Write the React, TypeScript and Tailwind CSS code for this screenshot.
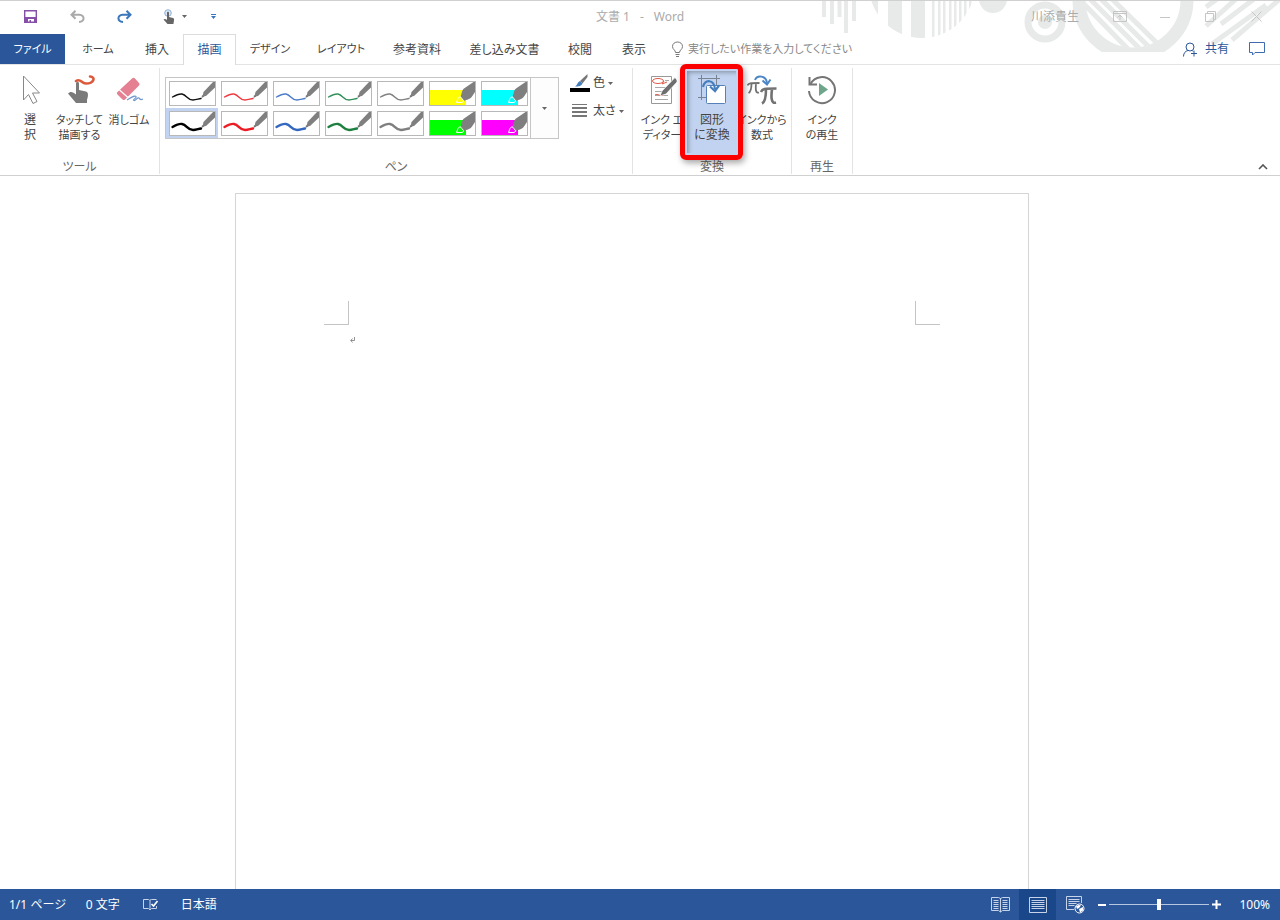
import React from "react";

const ribbonTabs = [
  { label: "ホーム", width: "w-[66px]", kana: true },
  { label: "挿入", width: "w-[52px]" },
  { label: "描画", width: "w-[53px]", active: true },
  { label: "デザイン", width: "w-[68px]", kana: true },
  { label: "レイアウト", width: "w-[74px]", kana: true },
  { label: "参考資料", width: "w-[78px]" },
  { label: "差し込み文書", width: "w-[97px]" },
  { label: "校閲", width: "w-[54px]" },
  { label: "表示", width: "w-[54px]" },
];

type Pen = { name: string; color: string; kind: "thin" | "thick" | "marker"; selected?: boolean };

const pens: Pen[] = [
  { name: "黒のペン", color: "#111111", kind: "thin" },
  { name: "赤のペン", color: "#f03a40", kind: "thin" },
  { name: "青のペン", color: "#4a7cc8", kind: "thin" },
  { name: "緑のペン", color: "#32905a", kind: "thin" },
  { name: "灰色のペン", color: "#808080", kind: "thin" },
  { name: "黄の蛍光ペン", color: "#ffff00", kind: "marker" },
  { name: "水色の蛍光ペン", color: "#00ffff", kind: "marker" },
  { name: "黒の太いペン", color: "#000000", kind: "thick", selected: true },
  { name: "赤の太いペン", color: "#ed1c24", kind: "thick" },
  { name: "青の太いペン", color: "#3468c0", kind: "thick" },
  { name: "緑の太いペン", color: "#1e8040", kind: "thick" },
  { name: "灰色の太いペン", color: "#7f7f7f", kind: "thick" },
  { name: "緑の蛍光ペン", color: "#00ff00", kind: "marker" },
  { name: "桃色の蛍光ペン", color: "#ff00ff", kind: "marker" },
];

function PenSwatch({ pen }: { pen: Pen }) {
  return (
    <svg width="45" height="23" viewBox="0 0 45 23" className="block">
      {pen.kind === "marker" ? (
        <>
          <path d="M0 8H36V23H0Z" fill={pen.color} />
          <path d="M45 0H43.500L34 6.500C31.500 8.500 32 12 30.500 14.500L34 19C37 17.500 40 17.500 42 14.500L45 10Z" fill="#7f7f7f" />
          <path d="M30 14.500L28 16.500L26.500 20.500H32L34 19Z" fill={pen.color} stroke="#fff" strokeWidth="1" />
        </>
      ) : (
        <>
          <path
            d="M2.500 15C6 13 9 11.500 12 12C17 13 17 18 23 18C26 18 28 17 31 16.500"
            fill="none"
            stroke={pen.color}
            strokeWidth={pen.kind === "thick" ? 2.4 : 1.4}
            strokeLinecap="round"
          />
          <path d="M45 0H43L33.500 10L32.500 14.500L36 14L45 5.500Z" fill="#7f7f7f" />
          <path d="M31.500 16L32 13L34.500 14.500Z" fill="#777" />
        </>
      )}
    </svg>
  );
}

function Caret({ className = "text-[#666]" }: { className?: string }) {
  return (
    <svg width="5" height="3" viewBox="0 0 5 3" className={className}>
      <path d="M0 0H5L2.500 3Z" fill="currentColor" />
    </svg>
  );
}

function TitleArt() {
  const stripes = [932, 938, 943, 949, 954, 959, 964, 969];
  return (
    <svg width="460" height="51" viewBox="820 1 460 51" className="pointer-events-none absolute right-0 top-0">
      <defs>
        <clipPath id="discClip">
          <circle cx="922" cy="-15" r="53" />
        </clipPath>
        <clipPath id="ringClip">
          <circle cx="1133" cy="0" r="48" />
        </clipPath>
      </defs>
      <g fill="#e7eae9">
        <path d="M822 0h4v17h-4zM830 0h4v24h-4zM837.500 0h4v17h-4zM844 0h4v33h-4zM852 0h4v21h-4z" />
        <g clipPath="url(#discClip)">
          <path d="M868 0h10v50h-10zM888 0h14v50h-14zM911 0h14v50h-14z" />
          {stripes.map((x) => (
            <path key={x} d={`M${x} 0h2.500v50h-2.500z`} />
          ))}
        </g>
        <circle cx="993" cy="-1" r="14" />
        <circle cx="1045" cy="22" r="7" />
      </g>
      <g fill="none" stroke="#e7eae9">
        <circle cx="1045" cy="22" r="17" strokeWidth="7" />
        <circle cx="1133" cy="0" r="54" strokeWidth="13" />
        <g clipPath="url(#ringClip)" strokeWidth="5">
          <path d="M1112 -1L1160 46M1101 -1L1149 47M1090 -1L1139 48M1079 -1L1128 49" />
        </g>
        <path
          d="M1217 -1L1206 7M1236 -1L1206 26M1254 -1L1221 24M1266 5L1212 44M1280 -1L1232 40"
          strokeWidth="5"
        />
      </g>
    </svg>
  );
}

function TouchIcon({ small = false }: { small?: boolean }) {
  return small ? (
    <svg width="14" height="16" viewBox="0 0 14 16">
      <circle cx="5" cy="4" r="3.300" fill="#dce8f5" stroke="#8fb0d8" />
      <path d="M4 3.500C4 2.500 6 2.500 6 3.500V8L10 9C11.500 9.500 11.300 11 10.500 14V15H4.500L0.500 10.500C1.500 9.500 3 10 4 11Z" fill="#666" />
    </svg>
  ) : (
    <svg width="30" height="30" viewBox="0 0 30 30">
      <path d="M11 8C11 6.500 14 6.500 14 8V15L21 16.500C24 17.500 23 22 22 25V28H11L3 18.500C5 16 8 16.500 11 19.500Z" fill="#7a7a7a" />
      <path d="M11 6C16 3 16 8.500 21 8.500C29 8.500 31 2 25 1.500" fill="none" stroke="#dc5a3c" strokeWidth="2.600" strokeLinecap="round" />
    </svg>
  );
}

function SelectIcon() {
  return (
    <svg width="20" height="30" viewBox="0 0 20 30">
      <path d="M3.500 1V25L8.500 19.500L13 28.500L17 26.500L12.500 18H19.500Z" fill="#fff" stroke="#888" strokeWidth="1" />
    </svg>
  );
}

function EraserIcon() {
  return (
    <svg width="28" height="28" viewBox="0 0 28 28">
      <path d="M2.500 17L17 3.500C18 2.500 19 2.500 20 3.500L24 8C25 9 24.500 10 24 10.500L10 24.500C9 25.500 8 25 7 24L2.500 19.500C1.500 18.500 1.800 17.800 2.500 17Z" fill="#e57f92" />
      <path d="M4.500 15L13 22.500" stroke="#fff" strokeWidth="1.200" />
      <path d="M12 25C17 22 20 20 21 21.500C22 23 17 25 19 25.500C21 26 22 22 24 23C25 25 26 25 28 24" fill="none" stroke="#7098cd" strokeWidth="1.200" />
    </svg>
  );
}

function InkEditorIcon() {
  return (
    <svg width="30" height="30" viewBox="0 0 30 30">
      <path d="M4.500 1.500H24.500V28.500H4.500Z" fill="#fff" stroke="#999" />
      <path d="M8 12.500H21M8 16.500H20M8 20.500H21M8 24.500H21M18 5.500H22" stroke="#aaa" />
      <ellipse cx="11" cy="6" rx="5.500" ry="2.500" fill="none" stroke="#df5a4b" />
      <path d="M17 6L15 9L20 7M8 20C11 18 13 22 16 20" fill="none" stroke="#df5a4b" />
      <path d="M28 2.500L30 5V7L19 19L13 21L15 16Z" fill="#6e6e6e" stroke="#fff" strokeWidth=".7" />
    </svg>
  );
}

function ShapeIcon() {
  return (
    <svg width="30" height="30" viewBox="0 0 30 30">
      <path d="M1 3.500H23M4.500 0V25M19.500 0V10M1 22.500H9" fill="none" stroke="#7b8390" />
      <rect x="9.500" y="10.500" width="19" height="18" rx="1" fill="#fff" stroke="#5580b8" />
      <path d="M6 12C8 4 17 4 18 14" fill="none" stroke="#457ebd" strokeWidth="2.200" />
      <path d="M13 11.500L18 16L22 10.500" fill="none" stroke="#457ebd" strokeWidth="2.200" />
    </svg>
  );
}

function MathIcon() {
  return (
    <svg width="30" height="30" viewBox="0 0 30 30">
      <g fill="none" stroke="#727272">
        <path d="M.5 10.500C1.500 8 3 8 12.500 8M4.500 8.500C4.500 14 3.500 17 1.500 18M9 8.500C8.500 14 8.500 18.500 12 17.500" strokeWidth="1.800" />
        <path d="M14 17C15.500 13.500 17 13.500 29.500 13.500M19 14C19 21 18 27 15 28.500M25 14C24 22 24 29 29 27.500" strokeWidth="2.600" />
      </g>
      <path d="M8 5C10 0 19 0 20 8" fill="none" stroke="#4b86c6" strokeWidth="2" />
      <path d="M15.500 5.500L20 9.500L23.500 4.500" fill="none" stroke="#4b86c6" strokeWidth="2" />
    </svg>
  );
}

function ReplayIcon() {
  return (
    <svg width="30" height="30" viewBox="0 0 30 30">
      <path d="M3.500 9A13 13 0 1 1 2 16" fill="none" stroke="#757575" strokeWidth="2" />
      <path d="M2.500 2V9.500H10" fill="none" stroke="#757575" strokeWidth="2" />
      <path d="M12 8L21 14.500L12 21Z" fill="#6ea58b" />
    </svg>
  );
}

type ToolProps = { icon: React.ReactNode; lines: string[]; width: string; pressed?: boolean; kana?: boolean };

function ToolButton({ icon, lines, width, pressed, kana }: ToolProps) {
  return (
    <button
      aria-pressed={pressed}
      className={`flex h-[88px] shrink-0 flex-col items-center pt-[7px] ${width} ${pressed ? "bg-[#c1d3f0]" : ""}`}
    >
      <span className="flex h-8 items-start">{icon}</span>
      <span
        className={`mt-[5px] flex flex-col items-center whitespace-nowrap leading-[15px] ${
          kana ? "text-[11px]" : "text-[12px]"
        }`}
      >
        {lines.map((line) => (
          <span key={line}>{line}</span>
        ))}
      </span>
    </button>
  );
}

function Group({ label, width, children }: { label: string; width: string; children: React.ReactNode }) {
  return (
    <section aria-label={label} className={`flex shrink-0 flex-col border-r border-[#e3e3e3] ${width}`}>
      <div className="flex h-[92px] shrink-0 items-start">{children}</div>
      <div className="text-center text-[12px] leading-[14px] text-[#666]">{label}</div>
    </section>
  );
}

function CropMark({ side }: { side: "left" | "right" }) {
  return (
    <span
      className={`block h-6 w-[25px] border-b border-[#c4c4c4] ${side === "left" ? "border-r" : "border-l"}`}
    />
  );
}

export default function App() {
  return (
    <div className="flex min-h-screen flex-col bg-white font-['Noto_Sans','Noto_Sans_CJK_JP',sans-serif] text-[12px] text-[#444] [font-feature-settings:'palt']">
      <header className="relative border-t border-[#d0d0d0]">
        <TitleArt />
        <div className="relative flex h-[33px] items-center pb-[2px]">
          <div className="flex flex-1 items-center">
            <button aria-label="上書き保存" className="ml-6">
              <svg width="13" height="13" viewBox="0 0 13 13" className="block">
                <path d="M.7 .7H12.300V12.300H.7Z" fill="#fff" stroke="#8650a8" strokeWidth="1.400" />
                <path d="M1 7H12V12H10V9H4V12H1Z" fill="#8650a8" />
                <path d="M5.500 10H7V12H5.500Z" fill="#8650a8" />
              </svg>
            </button>
            <button aria-label="元に戻す" className="ml-[33px]">
              <svg width="15" height="13" viewBox="0 0 15 13" className="block">
                <path d="M5.500 .8L1.500 4.800L5.500 8.800M2 4.800H9.500C15 5 15 11.500 9 12" fill="none" stroke="#aaa" strokeWidth="2" />
              </svg>
            </button>
            <button aria-label="やり直し" className="ml-8">
              <svg width="15" height="13" viewBox="0 0 15 13" className="block">
                <path d="M9.500 .8L13.500 4.800L9.500 8.800M13 4.800H5.500C0 5 0 11.500 6 12" fill="none" stroke="#3b77bb" strokeWidth="2" />
              </svg>
            </button>
            <button aria-label="タッチ/マウス モード" className="ml-[31px] flex items-center gap-[5px]">
              <TouchIcon small />
              <Caret />
            </button>
            <button aria-label="クイック アクセス ツール バーのユーザー設定" className="ml-6">
              <svg width="5" height="5" viewBox="0 0 5 5">
                <path d="M0 0H5V1H0ZM0 2H5L2.500 5Z" fill="#3b77bb" />
              </svg>
            </button>
          </div>
          <h1 className="flex gap-[10px] text-[12px] font-normal text-[#aaa]">
            <span>文書 1</span>
            <span>-</span>
            <span>Word</span>
          </h1>
          <div className="flex flex-1 items-center justify-end text-[#c6c6c6]">
            <span className="mr-[34px] text-[#aaa]">川添貴生</span>
            <button aria-label="リボンの表示オプション" className="mr-[33px]">
              <svg width="14" height="11" viewBox="0 0 14 11" fill="none" stroke="currentColor" className="block">
                <path d="M.5 .5H13.500V10.500H.5ZM.5 2.500H13.500M7 9V4M4.500 6.500L7 4L9.500 6.500" />
              </svg>
            </button>
            <button aria-label="最小化" className="mr-[35px]">
              <svg width="10" height="10" viewBox="0 0 10 10" stroke="currentColor" className="block">
                <path d="M0 5.500H10" />
              </svg>
            </button>
            <button aria-label="元に戻す (縮小)" className="mr-[35px]">
              <svg width="11" height="11" viewBox="0 0 11 11" fill="none" stroke="currentColor" className="block">
                <path d="M.5 2.500H8.500V10.500H.5ZM2.500 2V.5H10.500V8.500H9" />
              </svg>
            </button>
            <button aria-label="閉じる" className="mr-[18px]">
              <svg width="11" height="11" viewBox="0 0 11 11" stroke="currentColor" className="block">
                <path d="M.5 .5L10.500 10.500M10.500 .5L.5 10.500" />
              </svg>
            </button>
          </div>
        </div>

        <div className="relative flex h-[31px] items-stretch border-b border-[#e3e3e3]">
          <button className="w-[65px] bg-[#2b579a] text-[11px] text-white">ファイル</button>
          <nav className="flex" role="tablist">
            {ribbonTabs.map((tab) => (
              <button
                key={tab.label}
                role="tab"
                aria-selected={!!tab.active}
                className={`whitespace-nowrap ${tab.width} ${tab.kana ? "text-[11px]" : ""} ${
                  tab.active
                    ? "-mb-px border border-b-0 border-[#dcdcdc] bg-white text-[#2b579a]"
                    : "pt-px"
                }`}
              >
                {tab.label}
              </button>
            ))}
          </nav>
          <label className="ml-[10px] flex flex-1 items-center gap-1">
            <svg width="13" height="16" viewBox="0 0 13 16" fill="none" stroke="#777">
              <path d="M4.500 11.500C4.500 9 1.500 8.500 1.500 5.500C1.500 -.5 11.500 -.5 11.500 5.500C11.500 8.500 8.500 9 8.500 11.500ZM4.500 13.500H8.500M5 15.500H8" />
            </svg>
            <input
              aria-label="操作アシスト"
              placeholder="実行したい作業を入力してください"
              className="w-60 bg-transparent text-[11px] outline-none placeholder:text-[#888]"
            />
          </label>
          <button className="mr-5 flex items-center gap-2 text-[#2b579a]">
            <svg width="14" height="15" viewBox="0 0 14 15" fill="none" stroke="currentColor">
              <circle cx="7" cy="5" r="4" />
              <path d="M.5 14.500C.5 11 2.500 9 5 8.500M9 8.500L10 9.500M8 11.500H14M11 8.500V14.500" />
            </svg>
            共有
          </button>
          <button aria-label="コメント" className="mr-[15px] text-[#3f6cae]">
            <svg width="16" height="14" viewBox="0 0 16 14" fill="none" stroke="currentColor">
              <path d="M.5 .5H15.500V10.500H6L3.500 13V10.500H.5Z" />
            </svg>
          </button>
        </div>
      </header>

      <div className="relative flex h-[111px] border-b border-[#d0d0d0] pt-[3px] pb-px" role="toolbar" aria-label="描画">
        <Group label="ツール" width="w-[160px]">
          <div className="flex pl-[5px]">
            <ToolButton icon={<SelectIcon />} lines={["選", "択"]} width="w-[50px]" />
            <ToolButton icon={<TouchIcon />} lines={["タッチして", "描画する"]} width="w-[49px]" kana />
            <ToolButton icon={<EraserIcon />} lines={["消しゴム"]} width="w-[50px]" kana />
          </div>
        </Group>

        <Group label="ペン" width="w-[473px]">
          <div className="ml-[5px] mt-[9px] flex border border-[#c6c6c6]">
            <div className="grid grid-cols-7">
              {pens.map((pen) => (
                <button
                  key={pen.name}
                  aria-label={pen.name}
                  aria-pressed={!!pen.selected}
                  className={`flex h-[30px] w-[52px] items-center justify-center ${pen.selected ? "bg-[#c1d3f0]" : ""}`}
                >
                  <span className="border border-[#b8b8b8] bg-white">
                    <PenSwatch pen={pen} />
                  </span>
                </button>
              ))}
            </div>
            <button aria-label="その他のペン" className="flex w-7 items-center justify-center border-l border-[#c6c6c6] bg-[#fdfdfd]">
              <Caret />
            </button>
          </div>
          <div className="ml-[11px] mt-px flex flex-col">
            <button className="flex h-7 items-center gap-[3px]">
              <svg width="20" height="18" viewBox="0 0 20 18">
                <path d="M0 14H20V18H0Z" fill="#000" />
                <path d="M17.500 0L10 7L12.500 9.500L17.500 3Z" fill="#777" />
                <path d="M10 7L12.500 9.500C11 12.500 8 12.500 5 12.500C7.500 11 7.500 8 10 7Z" fill="#457ebd" />
              </svg>
              色
              <Caret />
            </button>
            <button className="flex h-7 items-center gap-[3px]">
              <svg width="20" height="14" viewBox="0 0 20 14" fill="#777">
                <path d="M2 0H17V1H2ZM2 3H17V5H2ZM2 7H17V9H2ZM2 11H17V13H2Z" />
              </svg>
              太さ
              <Caret />
            </button>
          </div>
        </Group>

        <Group label="変換" width="w-[159px]">
          <div className="relative flex pl-1">
            <ToolButton icon={<InkEditorIcon />} lines={["インク エ", "ディター"]} width="w-[50px]" kana />
            <ToolButton icon={<ShapeIcon />} lines={["図形", "に変換"]} width="w-[50px]" pressed />
            <ToolButton icon={<MathIcon />} lines={["インクから", "数式"]} width="w-[50px]" kana />
            <span className="pointer-events-none absolute -top-1 left-[47px] h-24 w-[63px] rounded-[6px] border-[5px] border-[#fa0000] shadow-[2px_3px_6px_rgba(0,0,0,0.35),inset_0_0_0_2px_#c1d3f0,inset_3px_3px_5px_rgba(0,0,0,0.35)]" />
          </div>
        </Group>

        <Group label="再生" width="w-[61px]">
          <ToolButton icon={<ReplayIcon />} lines={["インク", "の再生"]} width="w-[60px]" kana />
        </Group>

        <button aria-label="リボンを折りたたむ" className="ml-auto mr-3 self-end pb-1">
          <svg width="10" height="6" viewBox="0 0 10 6" fill="none" stroke="#555" strokeWidth="1.600">
            <path d="M1 5L5 1L9 5" />
          </svg>
        </button>
      </div>

      <main className="flex flex-1 justify-center pr-4 pt-[17px]">
        <article className="w-[794px] border border-b-0 border-[#d5d5d5] px-[88px] pt-[107px]">
          <div className="flex justify-between">
            <CropMark side="left" />
            <CropMark side="right" />
          </div>
          <div className="pl-[26px] pt-3">
            <svg width="5" height="6" viewBox="0 0 5 6" fill="none" stroke="#777" strokeWidth=".8">
              <path d="M4.500 0V3.500H.8M2.500 1.500L.8 3.500L2.500 5.500" />
            </svg>
          </div>
        </article>
      </main>

      <footer className="flex h-[31px] items-center bg-[#2b579a] text-white">
        <span className="ml-[9px]">1/1 ページ</span>
        <span className="ml-5">0 文字</span>
        <button aria-label="文章校正" className="ml-[23px]">
          <svg width="15" height="13" viewBox="0 0 15 13" fill="none" stroke="#c7d3e8" className="block">
            <path d="M6.500 2L5.500 1.500H.5V10.500H5.500L7 12L8.500 10.500H13.500V8M7 12V2L8.500 1.500H13.500" />
            <path d="M8.500 6L10.500 8L14.500 3" stroke="#fff" strokeWidth="1.600" />
          </svg>
        </button>
        <span className="ml-[23px]">日本語</span>
        <div className="ml-auto flex h-full items-center">
          <button aria-label="閲覧モード" className="flex h-full w-[38px] items-center justify-center">
            <svg width="19" height="17" viewBox="0 0 19 17" fill="none" stroke="#c7d3e8">
              <path d="M.5 1.500H7.500L9.500 2.500L11.500 1.500H18.500V14.500H11.500L9.500 16L7.500 14.500H.5ZM9.500 2V16M2.500 4.500H7.500M2.500 6.500H7.500M2.500 8.500H7.500M2.500 10.500H7.500M2.500 12.500H7.500M11.500 4.500H16.500M11.500 6.500H16.500M11.500 8.500H16.500M11.500 10.500H16.500M11.500 12.500H16.500" />
            </svg>
          </button>
          <button aria-label="印刷レイアウト" aria-pressed className="flex h-full w-[37px] items-center justify-center bg-[#19478a]">
            <svg width="18" height="16" viewBox="0 0 18 16" fill="none" stroke="#c7d3e8">
              <path d="M.5 .5H17.500V15.500H.5ZM2.500 3.500H15.500M2.500 5.500H15.500M2.500 7.500H15.500M2.500 9.500H15.500M2.500 11.500H15.500" />
            </svg>
          </button>
          <button aria-label="Web レイアウト" className="flex h-full w-[38px] items-center justify-center">
            <svg width="19" height="18" viewBox="0 0 19 18" fill="none" stroke="#c7d3e8">
              <path d="M8 13.500H.5V.5H15.500V7M2.500 3.500H13.500M2.500 5.500H13.500M2.500 7.500H10.500M2.500 9.500H8.500" />
              <circle cx="13.500" cy="12.500" r="4.500" fill="#2b579a" stroke="#fff" />
              <path d="M10 10L13 9L15 9.500L13 12L11 13ZM13 13L17 11L17 14.500L14 16.500Z" fill="#fff" stroke="none" />
            </svg>
          </button>
          <button aria-label="縮小" className="ml-[3px] flex h-full w-[10px] items-center justify-center">
            <span className="h-0.5 w-2 bg-white" />
          </button>
          <input
            type="range"
            min={10}
            max={190}
            defaultValue={100}
            aria-label="ズーム"
            className="mx-[2px] h-[11px] w-[100px] appearance-none bg-transparent [&::-webkit-slider-runnable-track]:h-[11px] [&::-webkit-slider-runnable-track]:bg-[linear-gradient(to_bottom,transparent_5px,#b8c7e0_5px,#b8c7e0_6px,transparent_6px)] [&::-webkit-slider-thumb]:h-[11px] [&::-webkit-slider-thumb]:w-[4px] [&::-webkit-slider-thumb]:appearance-none [&::-webkit-slider-thumb]:bg-white"
          />
          <button aria-label="拡大" className="flex h-full w-[10px] items-center justify-center">
            <svg width="9" height="9" viewBox="0 0 9 9" stroke="#fff" strokeWidth="2">
              <path d="M0 4.500H9M4.500 0V9" />
            </svg>
          </button>
          <button className="ml-4 mr-[10px] w-[33px] text-right">100%</button>
        </div>
      </footer>
    </div>
  );
}
